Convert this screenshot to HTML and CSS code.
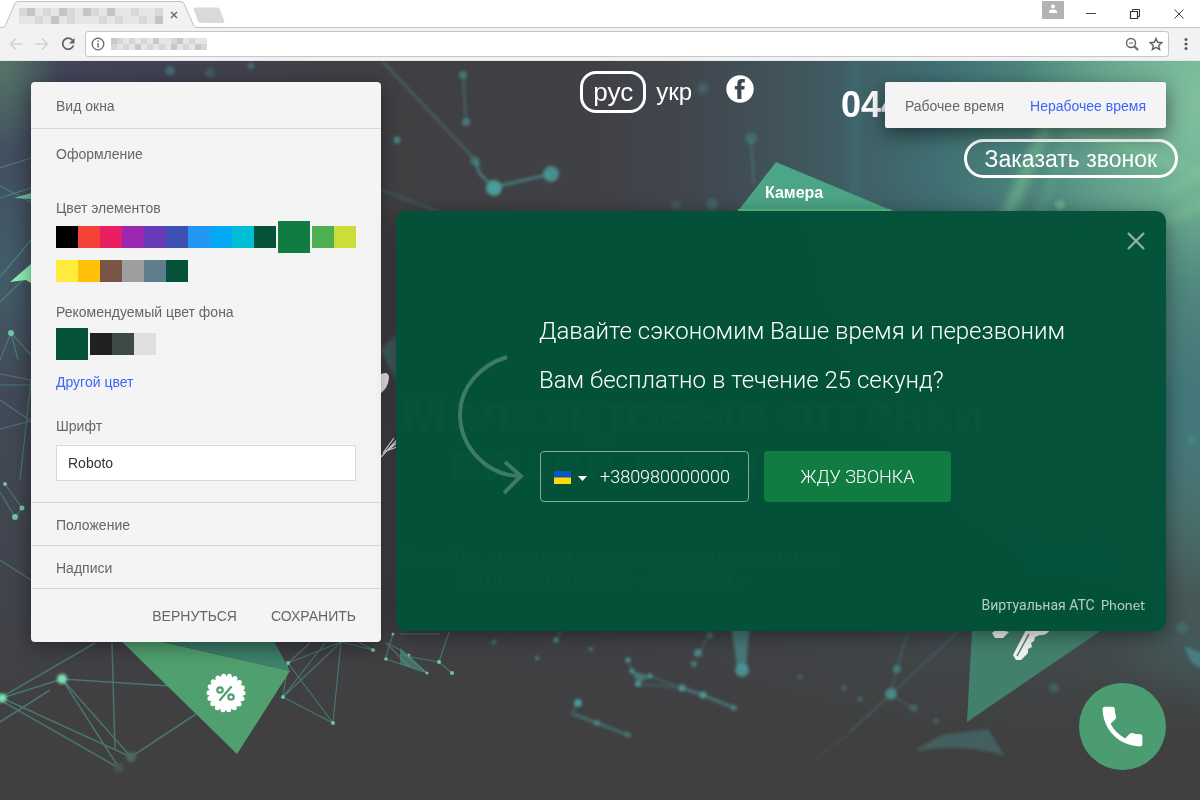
FILE: index.html
```html
<!DOCTYPE html>
<html lang="ru">
<head>
<meta charset="utf-8">
<title>Настройка виджета</title>
<link rel="stylesheet" href="styles.css">
</head>
<body>
<header class="browser">
  <div class="tab-strip">
    <div class="tab">
      <svg class="tab-shape" width="225" height="28" viewBox="0 0 225 28" aria-hidden="true">
        <path d="M0 27H3Q5 27 6 24L15 5.500Q16 3.500 18 3.500H181Q183 3.500 184 5.500L193 24Q194 27 197 27V28H0Z" fill="#f2f2f2"/>
        <path d="M0 27.500H3Q5 27.500 6 24L15 3.500Q16 1.500 18 1.500H181Q183 1.500 184 3.500L193 24Q194 27.500 197 27.500H225" fill="#f2f2f2" stroke="#c0c0c0"/>
        <path d="M195 7.500H217Q219 7.500 220 9.500L224 20Q225 23 222 23H202Q199 23 198 21L194 10Q193 7.500 195 7.500Z" fill="#d9d9d9"/>
        <path d="M19 8h144v16H19z" fill="#e5e5e5"/>
        <path d="M35 16h8v8h-8zM43 8h8v8h-8zM67 8h8v8h-8zM67 16h8v8h-8zM91 8h8v8h-8zM99 16h8v8h-8zM115 16h8v8h-8zM131 8h8v8h-8zM139 16h8v8h-8zM155 8h8v8h-8zM19 8h8v8h-8z" fill="#d9d9d9"/>
        <path d="M27 8h8v8h-8zM51 16h8v8h-8zM59 8h8v8h-8zM83 8h8v8h-8zM107 8h8v8h-8zM155 16h8v8h-8z" fill="#c4c4c4"/>
      </svg>
      <button class="tab-close" type="button" aria-label="Закрыть вкладку">
        <svg width="8" height="8" viewBox="0 0 8 8"><path d="M1 1l6 6M7 1l-6 6" stroke="#666" stroke-width="1.400"/></svg>
      </button>
    </div>
    <div class="window-controls">
      <span class="profile"><svg width="22" height="18" viewBox="0 0 22 18"><path d="M0 0h22v18H0z" fill="#b3b3b3"/><circle cx="11" cy="5.500" r="2" fill="#fff"/><path d="M7 12V10.500Q7 8.500 11 8.500T15 10.500V12Z" fill="#fff"/></svg></span>
      <button type="button" aria-label="Свернуть"><svg width="12" height="12" viewBox="0 0 12 12"><path d="M1 5.500h10" stroke="#444"/></svg></button>
      <button type="button" aria-label="Развернуть"><svg width="12" height="12" viewBox="0 0 12 12" fill="none" stroke="#333"><path d="M1.500 3.500h7v7h-7z" stroke-width="1.200"/><path d="M3.500 3.500v-2h7v7h-2"/></svg></button>
      <button type="button" aria-label="Закрыть"><svg width="12" height="12" viewBox="0 0 12 12"><path d="M1.500 1.500l9 9M10.500 1.500l-9 9" stroke="#444"/></svg></button>
    </div>
  </div>
  <div class="toolbar">
    <button type="button" aria-label="Назад"><svg width="14" height="14" viewBox="0 0 14 14" fill="none" stroke="#d2d2d2" stroke-width="1.500"><path d="M13.500 7H2M7 1.500L1.500 7 7 12.500"/></svg></button>
    <button type="button" aria-label="Вперёд"><svg width="14" height="14" viewBox="0 0 14 14" fill="none" stroke="#d2d2d2" stroke-width="1.500"><path d="M.5 7H12M7 1.500L12.500 7 7 12.500"/></svg></button>
    <button type="button" aria-label="Обновить"><svg width="14" height="14" viewBox="0 0 14 14"><path d="M11.500 3.300A5.500 5.500 0 1 0 12.400 8.500" fill="none" stroke="#606060" stroke-width="1.700"/><path d="M13.500 1v5.500H8z" fill="#606060"/></svg></button>
    <div class="address">
      <svg width="14" height="14" viewBox="0 0 14 14"><circle cx="7" cy="7" r="5.800" fill="none" stroke="#666" stroke-width="1.300"/><path d="M7 6v4.500M7 3.500V5" stroke="#666" stroke-width="1.400"/></svg>
      <svg class="address-mask" width="96" height="12" viewBox="0 0 96 12" aria-hidden="true">
        <path d="M0 0h96v12H0z" fill="#e5e5e5"/>
        <path d="M6 0h6v6H6zM0 6h6v6H0zM18 0h6v6h-6zM12 6h6v6h-6zM30 0h6v6h-6zM36 6h6v6h-6zM48 6h6v6h-6zM60 0h6v6h-6zM72 6h6v6h-6zM78 0h6v6h-6zM90 6h6v6h-6z" fill="#d6d6d6"/>
        <path d="M0 0h6v6H0zM24 6h6v6h-6zM42 0h6v6h-6zM60 6h6v6h-6zM66 0h6v6h-6zM84 6h6v6h-6z" fill="#c8c8c8"/>
      </svg>
      <span class="address-tools">
        <svg width="14" height="14" viewBox="0 0 14 14" fill="none" stroke="#666"><circle cx="6" cy="6" r="4.500" stroke-width="1.400"/><path d="M9.200 9.200L13 13" stroke-width="2"/><path d="M4 6h4"/></svg>
        <svg width="14" height="14" viewBox="0 0 14 14"><path d="M7 1.500l1.600 3.800 4.200.4-3.200 2.700 1 4.100L7 10.300l-3.600 2.200 1-4.100L1.200 5.700l4.200-.4z" fill="none" stroke="#606060" stroke-width="1.400"/></svg>
      </span>
    </div>
    <button class="menu" type="button" aria-label="Меню"><svg width="4" height="12" viewBox="0 0 4 12" fill="#555"><circle cx="2" cy="1.500" r="1.500"/><circle cx="2" cy="6" r="1.500"/><circle cx="2" cy="10.500" r="1.500"/></svg></button>
  </div>
</header>

<main class="stage">
  <svg class="scene" viewBox="0 61 1200 739" preserveAspectRatio="xMidYMin slice" aria-hidden="true">
    <defs>
      <linearGradient id="base" x1="0" x2="1" y1="0" y2="0">
        <stop offset="0" stop-color="#425060"/><stop offset=".05" stop-color="#414558"/><stop offset=".15" stop-color="#404150"/><stop offset=".33" stop-color="#404043"/>
        <stop offset=".5" stop-color="#404146"/><stop offset=".58" stop-color="#41474f"/><stop offset=".68" stop-color="#41585f"/><stop offset=".78" stop-color="#3f6f73"/><stop offset=".9" stop-color="#549184"/><stop offset="1" stop-color="#62a88e"/>
      </linearGradient>
      <linearGradient id="fade" x1="0" x2="0" y1="0" y2="1">
        <stop offset=".15" stop-color="#404048" stop-opacity="0"/><stop offset=".45" stop-color="#404048" stop-opacity=".35"/><stop offset=".7" stop-color="#404046" stop-opacity=".75"/><stop offset=".85" stop-color="#404042" stop-opacity=".95"/><stop offset=".92" stop-color="#404040"/>
      </linearGradient>
      <radialGradient id="mint"><stop offset="0" stop-color="#8ac6a2"/><stop offset="1" stop-color="#8ac6a2" stop-opacity="0"/></radialGradient>
      <radialGradient id="moss"><stop offset="0" stop-color="#5a806a"/><stop offset="1" stop-color="#5a806a" stop-opacity="0"/></radialGradient>
      <radialGradient id="teal"><stop offset="0" stop-color="#42777b"/><stop offset="1" stop-color="#42777b" stop-opacity="0"/></radialGradient>
      <linearGradient id="shade" x1="0" x2="0" y1="0" y2="1"><stop offset="0" stop-color="#357260"/><stop offset="1" stop-color="#418670"/></linearGradient>
      <filter id="soft" x="-20%" y="-20%" width="140%" height="140%"><feGaussianBlur stdDeviation="1.800"/></filter>
      <filter id="haze" x="-40%" y="-40%" width="180%" height="180%"><feGaussianBlur stdDeviation="5"/></filter>
    </defs>
    <rect y="61" width="1200" height="739" fill="url(#base)"/>
    <rect y="61" width="1200" height="739" fill="url(#fade)"/>
    <ellipse cx="1210" cy="100" rx="190" ry="190" fill="url(#mint)" opacity=".8"/>
    <ellipse cx="0" cy="61" rx="60" ry="90" fill="url(#moss)" opacity=".8"/>
    <ellipse cx="0" cy="270" rx="60" ry="110" fill="url(#teal)" opacity=".4"/>
    <ellipse cx="1190" cy="400" rx="90" ry="200" fill="url(#teal)"/>
    <ellipse cx="1200" cy="650" rx="90" ry="60" fill="url(#teal)" opacity=".3"/>
    <g filter="url(#haze)" stroke="#84cc98" fill="none">
      <path d="M1052 115L1005 220" stroke-width="12" opacity=".5"/>
      <path d="M1072 125L1038 220" stroke-width="5" opacity=".3"/>
      <path d="M1060 125L1210 175" stroke-width="10" opacity=".35"/>
      <path d="M1166 222L1210 200M1166 192L1210 170" stroke-width="8" opacity=".4"/>
      <path d="M1166 490V380" stroke="#3a7078" stroke-width="14" opacity=".5"/>
      <path d="M855 61V210" stroke="#3f8082" stroke-width="8" opacity=".35"/>
    </g>
    <g filter="url(#soft)" stroke="#4b9595" fill="#4b9c9a" stroke-width="2">
      <path d="M383 62L480 165" fill="none" opacity=".45"/>
      <path d="M475 161L480 174L494 187L551 174" fill="none" opacity=".65" stroke-width="3"/>
      <path d="M463 75L466 122M751 138L754 185" fill="none" opacity=".45"/>
      <path d="M381 190L440 212" fill="none" opacity=".3"/>
      <circle cx="494" cy="188" r="7"/><circle cx="551" cy="174" r="7" opacity=".85"/><circle cx="475" cy="161" r="4" opacity=".4"/>
      <circle cx="463" cy="75" r="3" opacity=".6"/><circle cx="466" cy="122" r="3" opacity=".6"/><circle cx="397" cy="140" r="2.500" opacity=".8"/>
      <circle cx="170" cy="71" r="4" opacity=".45"/><circle cx="210" cy="73" r="4" opacity=".3"/><circle cx="251" cy="66" r="2" opacity=".6"/>
      <circle cx="703" cy="88" r="5" opacity=".3"/><circle cx="751" cy="138" r="5" opacity=".35"/><circle cx="712" cy="204" r="5" opacity=".3"/><circle cx="676" cy="205" r="4" opacity=".2"/>
      <circle cx="1060" cy="205" r="5" stroke="none" fill="#80c99a" opacity=".5"/>
      <path d="M732 625L738 668H745L749 625Z" opacity=".6"/><circle cx="742" cy="670" r="6" opacity=".85"/>
      <path d="M632 671L650 676L638 684Z" stroke="none" opacity=".6"/>
      <path d="M638 684L682 688M650 676L682 688" fill="none" opacity=".35"/>
      <path d="M682 688L703 695L734 708" fill="none" stroke-width="3" opacity=".6"/>
      <circle cx="632" cy="671" r="1.500"/><circle cx="650" cy="676" r="1.500"/><circle cx="638" cy="684" r="2"/><circle cx="682" cy="688" r="2.500"/><circle cx="703" cy="695" r="2.500"/><circle cx="734" cy="708" r="2" opacity=".7"/>
      <path d="M578 703L571 714" fill="none" opacity=".4"/><path d="M573 714L597 723L628 735" fill="none" stroke-width="3" opacity=".5"/><circle cx="578" cy="703" r="3"/><circle cx="597" cy="723" r="2" opacity=".7"/><circle cx="628" cy="735" r="2" opacity=".5"/>
      <circle cx="698" cy="653" r="3" opacity=".8"/><circle cx="694" cy="664" r="2" opacity=".7"/><circle cx="710" cy="635" r="2" opacity=".5"/><circle cx="628" cy="660" r="1.500"/><circle cx="591" cy="649" r="1" opacity=".8"/><circle cx="556" cy="640" r="1.500"/><circle cx="537" cy="658" r="1" opacity=".8"/><circle cx="494" cy="642" r="1" opacity=".8"/>
      <path d="M628 660L632 671M556 640L562 630M698 653L710 635" opacity=".35"/>
      <path d="M908 632L896 670L891 694L850 732M891 694L958 632M891 694L915 710" fill="none" opacity=".3"/>
      <circle cx="891" cy="694" r="5" opacity=".75"/><circle cx="897" cy="669" r="3" opacity=".6"/><circle cx="914" cy="708" r="3" opacity=".35"/><circle cx="860" cy="699" r="2" opacity=".4"/><circle cx="800" cy="677" r="2" opacity=".3"/><circle cx="844" cy="688" r="2" opacity=".4"/>
      <path d="M917 750L942 736L988 730L1002 754Q960 742 917 750Z" opacity=".35"/>
      <path d="M848 734L812 762" opacity=".15"/><circle cx="936" cy="721" r="2" opacity=".35"/><circle cx="1054" cy="688" r="4" opacity=".3"/><path d="M1186 648L1202 654V668L1192 662Z" opacity=".6"/><circle cx="1182" cy="628" r="5" opacity=".3"/><circle cx="1192" cy="440" r="3" opacity=".5"/>
      <path d="M381 350L397 336V380Z" opacity=".35"/>
    </g>
    <g stroke="#4fa18c" fill="none" stroke-width="1.200" opacity=".55">
      <path d="M0 186L31 202M0 168L31 158M0 198L31 188M0 277L31 240M0 302L31 272M11 333L0 360M11 333L31 355M11 333L18 360M0 385H31M0 374L31 380M0 429L31 421M0 400L31 421M5 484L22 508L15 517L0 492M31 380L20 480M0 560L31 580"/>
      <path d="M0 698L95 643M2 698L62 679L170 686M2 698L131 757M0 700L119 768M62 679L131 757M62 679L119 768M131 757L196 714M112 643L115 750M0 722L50 690" stroke-width="1.500"/>
      <path d="M288 663L341 642L283 697M288 663L310 643M325 643L283 697L333 723L341 642M288 663L333 723M288 663L283 697M341 642L373 650M359 642L373 650M393 634L385 660M387 643L400 650L427 673L386 659M400 634H440M400 655L439 662L452 673M439 662L449 632M386 643L410 667"/>
    </g>
    <path d="M10 282L31 264V283L26 280Z" fill="#8ef0b4"/>
    <path d="M14 198L31 193V199Z" fill="#78d9b0" opacity=".8"/>
    <g fill="#7de0b4">
      <circle cx="62" cy="679" r="5" filter="url(#soft)"/><circle cx="2" cy="698" r="4.500" filter="url(#soft)"/><circle cx="131" cy="757" r="5" fill="#4d6b60" filter="url(#soft)"/><circle cx="119" cy="768" r="5" fill="#46544f" filter="url(#soft)"/>
      <g opacity=".8"><circle cx="11" cy="333" r="3"/><circle cx="5" cy="484" r="2"/><circle cx="22" cy="508" r="2.500"/><circle cx="15" cy="517" r="3"/>
      <circle cx="288" cy="663" r="2"/><circle cx="283" cy="697" r="2"/><circle cx="333" cy="723" r="2"/><circle cx="373" cy="650" r="2"/><circle cx="386" cy="659" r="1.800"/><circle cx="393" cy="634" r="1.500"/><circle cx="409" cy="655" r="1.500"/><circle cx="427" cy="673" r="1.500"/><circle cx="439" cy="662" r="2"/><circle cx="452" cy="673" r="2"/></g>
    </g>
    <path d="M400 648L409 655L427 673L400 664Z" fill="#4c9e8b" opacity=".5"/>
    <path d="M776 162L893 211H738Z" fill="#4ca585"/>
    <path d="M738 209H890L893 211H738Z" fill="#58c487"/>
    <path d="M110 630L290 671L237 754Z" fill="#4fa06e"/>
    <path d="M110 630H268L290 671Z" fill="url(#shade)"/>
    <path d="M972 630H1102L967 722Z" fill="#42806b"/>
    <circle cx="226" cy="693" r="17" fill="#fff"/>
    <circle cx="226" cy="693" r="17" fill="none" stroke="#fff" stroke-width="5" stroke-linecap="round" stroke-dasharray="0 5.934"/>
    <g fill="none" stroke="#4fa06e" stroke-width="2.200"><circle cx="220" cy="690" r="2.700"/><circle cx="231" cy="697" r="2.700"/><path d="M231 687L220 700" stroke-linecap="round"/></g>
    <g fill="#f2f2f2">
      <path d="M381 374Q389 371 389 378Q388 388 381 393Z"/>
      <path d="M992 633L997 629L1009 632L1003 638L995 638Z"/>
      <path d="M1026 630H1050Q1046 636 1040 635L1035 637L1034 641L1031 643L1032 647L1028 649L1028 653L1021 660L1016 660L1013 655Z"/>
    </g>
    <path d="M1029 634L1017 656" stroke="#42806b" stroke-width="1.500"/>
    <path d="M381 457L397 440M383 453L394 438M386 451L397 447M385 452L397 443" stroke="#eee" fill="none" stroke-width="1.200"/>
    <text class="scene-label" x="765" y="198">Камера</text>
    <text class="scene-label scene-label-dim" x="1015" y="553">Выберите</text>
    <text class="scene-label scene-label-dim" x="1026" y="570">квартиру</text>
  </svg>

  <div class="site">
    <div class="site-header">
      <nav class="languages">
        <a class="language language-active" href="#">рус</a>
        <a class="language" href="#">укр</a>
      </nav>
      <a class="facebook" href="#" aria-label="Facebook">
        <svg width="28" height="28" viewBox="0 0 28 28"><circle cx="14" cy="14" r="13.700" fill="#fff"/><path d="M11.300 24V14.500H8.800V10.900H11.300V8.500C11.300 5.300 13 4 15.800 4H18.800V7.500H16.800C15.700 7.500 15.400 8 15.400 9V10.900H18.700L18.300 14.500H15.400V24Z" fill="#40464e"/></svg>
      </a>
      <div class="contacts">
        <span class="site-phone">044</span>
        <button class="order-call" type="button">Заказать звонок</button>
      </div>
    </div>
    <div class="hero">
      <h1>Малахитовые оттенки<br><span>вашей жизни</span></h1>
      <p>Узнайте, из каких оттенков состоит жизнь в<br>жилом комплексе «Малахит»</p>
    </div>
  </div>

  <div class="widget">
    <form class="panel">
      <button class="section-title" type="button">Вид окна</button>
      <section class="appearance">
        <button class="section-title section-open" type="button">Оформление</button>
        <fieldset class="palette">
          <legend>Цвет элементов</legend>
          <div class="swatches">
            <input class="c-black" type="radio" name="accent" aria-label="Чёрный">
            <input class="c-red" type="radio" name="accent" aria-label="Красный">
            <input class="c-pink" type="radio" name="accent" aria-label="Розовый">
            <input class="c-purple" type="radio" name="accent" aria-label="Пурпурный">
            <input class="c-violet" type="radio" name="accent" aria-label="Фиолетовый">
            <input class="c-indigo" type="radio" name="accent" aria-label="Индиго">
            <input class="c-blue" type="radio" name="accent" aria-label="Синий">
            <input class="c-sky" type="radio" name="accent" aria-label="Голубой">
            <input class="c-cyan" type="radio" name="accent" aria-label="Бирюзовый">
            <input class="c-malachite" type="radio" name="accent" aria-label="Малахитовый">
            <input class="c-emerald" type="radio" name="accent" aria-label="Изумрудный" checked>
            <input class="c-green" type="radio" name="accent" aria-label="Зелёный">
            <input class="c-lime" type="radio" name="accent" aria-label="Лаймовый">
            <input class="c-yellow" type="radio" name="accent" aria-label="Жёлтый">
            <input class="c-amber" type="radio" name="accent" aria-label="Янтарный">
            <input class="c-brown" type="radio" name="accent" aria-label="Коричневый">
            <input class="c-grey" type="radio" name="accent" aria-label="Серый">
            <input class="c-slate" type="radio" name="accent" aria-label="Серо-синий">
            <input class="c-malachite" type="radio" name="accent" aria-label="Тёмно-зелёный">
          </div>
        </fieldset>
        <fieldset class="palette">
          <legend>Рекомендуемый цвет фона</legend>
          <div class="swatches">
            <input class="c-malachite" type="radio" name="background" aria-label="Малахитовый" checked>
            <input class="c-coal" type="radio" name="background" aria-label="Угольный">
            <input class="c-graphite" type="radio" name="background" aria-label="Графитовый">
            <input class="c-light" type="radio" name="background" aria-label="Светло-серый">
          </div>
        </fieldset>
        <a class="other-color" href="#">Другой цвет</a>
        <label class="font-label" for="font">Шрифт</label>
        <select class="font-select" id="font"><option>Roboto</option></select>
      </section>
      <button class="section-title section-low" type="button">Положение</button>
      <button class="section-title section-low" type="button">Надписи</button>
      <div class="panel-actions">
        <button type="button">ВЕРНУТЬСЯ</button>
        <button type="submit">СОХРАНИТЬ</button>
      </div>
    </form>

    <div class="preview">
      <div class="mode-switch">
        <button type="button">Рабочее время</button>
        <button class="mode-active" type="button">Нерабочее время</button>
      </div>
      <section class="popup">
        <button class="popup-close" type="button" aria-label="Закрыть окно">
          <svg width="18" height="18" viewBox="0 0 18 18"><path d="M1 1l16 16M17 1L1 17" stroke="#8db5a6" stroke-width="2.400"/></svg>
        </button>
        <div class="popup-body">
          <svg class="popup-arrow" width="68" height="142" viewBox="0 0 68 142" fill="none" stroke="#3e7a66" stroke-width="4" aria-hidden="true"><path d="M51 3C24 11 4 34 4 60C4 94 32 122 64 122"/><path d="M49 108L65 122L48 139"/></svg>
          <form class="callback">
            <p>Давайте сэкономим Ваше время и перезвоним<br>Вам бесплатно в течение 25 секунд?</p>
            <div class="callback-row">
              <div class="phone-field">
                <button class="country" type="button" aria-label="Украина">
                  <svg width="17" height="13" viewBox="0 0 17 13"><path d="M0 0h17v7H0z" fill="#0a57c2"/><path d="M0 6.500h17V13H0z" fill="#ffd90a"/></svg>
                  <svg class="caret" width="9" height="5" viewBox="0 0 9 5"><path d="M0 0h9L4.500 5z" fill="#fff"/></svg>
                </button>
                <input type="tel" value="+380980000000" aria-label="Номер телефона">
              </div>
              <button class="call-me" type="submit">ЖДУ ЗВОНКА</button>
            </div>
          </form>
        </div>
        <footer class="popup-footer"><span>Виртуальная АТС</span> <a href="#">Phonet</a></footer>
      </section>
      <button class="call-button" type="button" aria-label="Позвонить">
        <svg width="53" height="53" viewBox="0 0 24 24"><path fill="#fff" d="M6.620 10.790c1.440 2.830 3.760 5.140 6.590 6.590l2.200-2.200c.27-.27.67-.36 1.020-.24 1.120.37 2.330.57 3.570.57.55 0 1 .45 1 1V20c0 .55-.45 1-1 1-9.390 0-17-7.610-17-17 0-.55.45-1 1-1h3.500c.55 0 1 .45 1 1 0 1.250.2 2.450.57 3.570.11.35.03.74-.25 1.020l-2.200 2.200z"/></svg>
      </button>
    </div>
  </div>
</main>
</body>
</html>
```
FILE: styles.css
```css
* { box-sizing: border-box; }

body {
  margin: 0;
  min-height: 100vh;
  display: flex;
  flex-direction: column;
  font: 14px/20px "Liberation Sans", Arial, sans-serif;
  color: #666;
}

button, input, select {
  margin: 0;
  padding: 0;
  border: 0;
  background: none;
  font: inherit;
  color: inherit;
}

a { text-decoration: none; color: inherit; }
svg { display: block; flex: none; }

/* Browser window */
.browser { background: #f2f2f2; border-bottom: 1px solid #e4e8e4; }
.tab-strip {
  height: 28px;
  display: flex;
  justify-content: space-between;
  background: linear-gradient(#fff 27px, #c4c4c4 27px);
}
.tab { display: grid; }
.tab-shape, .tab-close { grid-area: 1 / 1; }
.tab-close { align-self: center; justify-self: start; margin-left: 170px; padding-top: 2px; }
.window-controls { display: flex; align-items: center; gap: 32px; padding-right: 15px; }
.profile { align-self: flex-start; padding-top: 1px; margin-right: -11px; }
.toolbar { display: flex; align-items: center; gap: 12px; height: 32px; padding: 0 12px 0 9px; }
.address {
  flex: 1;
  height: 26px;
  display: flex;
  align-items: center;
  gap: 6px;
  margin-left: -2px;
  padding: 0 5px;
  border: 1px solid #c6c6c6;
  border-radius: 3px;
  background: #fff;
}
.address-tools { display: flex; gap: 10px; margin-left: auto; }
.menu { margin-left: 3px; }

/* Stage */
.stage { position: relative; flex: 1; overflow: hidden; background: #404040; }
.scene { position: absolute; inset: 0; width: 100%; height: 100%; }
.scene-label { font: bold 16px "Liberation Sans", Arial, sans-serif; fill: #fff; }
.scene-label-dim { font-size: 20px; fill: #006080; }

/* Client site under the widget */
.site { position: absolute; inset: 0; color: #fff; }
.site-header { display: flex; justify-content: flex-end; align-items: flex-start; padding: 10px 22px 0; }
.languages { display: flex; align-items: center; gap: 10px; font-size: 24px; }
.language { line-height: 36px; }
.language-active { padding: 0 10px; border: 3px solid #fff; border-radius: 16px; font-size: 26px; }
.facebook { margin: 4px 87px 0 34px; }
.contacts { display: flex; flex-direction: column; width: 337px; }
.site-phone { font: bold 36px/68px "Liberation Sans", Arial, sans-serif; }
.order-call {
  align-self: flex-end;
  height: 39px;
  padding: 0 18px;
  border: 3px solid #fff;
  border-radius: 20px;
  font-size: 23px;
}
.hero { padding: 211px 0 0 402px; color: rgba(255, 255, 255, 0.6); }
.hero h1 { margin: 0; font: bold 53px/48px "Liberation Sans", Arial, sans-serif; }
.hero h1 span { padding-left: 46px; }
.hero p { width: 400px; margin: 60px 0 0; font: bold 20px/23px "Liberation Sans", Arial, sans-serif; text-align: center; white-space: nowrap; }

/* Widget settings */
.widget { position: relative; display: flex; align-items: flex-start; gap: 15px; padding: 21px 34px 30px 31px; }
.panel {
  flex: none;
  width: 350px;
  display: flex;
  flex-direction: column;
  border-radius: 4px;
  background: #f4f4f4;
  box-shadow: 0 4px 20px rgba(0, 0, 0, 0.4);
}
.section-title { height: 47px; padding: 2px 25px 0; border-bottom: 1px solid #d9d9d9; text-align: left; font-size: 14px; }
.section-open { height: 50px; padding: 0; border: 0; }
.section-low { height: 43px; }
.appearance { display: flex; flex-direction: column; padding: 0 25px 21px; border-bottom: 1px solid #d9d9d9; }
.palette { margin: 0; padding: 0; border: 0; min-width: 0; }
.palette legend { padding: 19px 0 3px; }
.palette + .palette legend { padding: 20px 0 6px; }
.swatches { display: flex; flex-wrap: wrap; align-items: center; row-gap: 7px; }
.swatches input { appearance: none; width: 22px; height: 22px; }
.swatches input:checked { width: 32px; height: 32px; margin: 0 2px; }
.swatches input:checked:first-child { margin-left: 0; }
.other-color { align-self: flex-start; margin-top: 12px; color: #3d64ff; }
.font-label { margin-top: 24px; }
.font-select {
  appearance: none;
  height: 36px;
  margin-top: 9px;
  padding: 0 11px;
  border: 1px solid #d9d9d9;
  border-radius: 0;
  background: #fff;
  color: #333;
}
.panel-actions { display: flex; justify-content: flex-end; gap: 34px; height: 53px; padding: 0 25px; }

.c-black { background: #000; }
.c-red { background: #f44336; }
.c-pink { background: #e91e63; }
.c-purple { background: #9c27b0; }
.c-violet { background: #673ab7; }
.c-indigo { background: #3f51b5; }
.c-blue { background: #2196f3; }
.c-sky { background: #03a9f4; }
.c-cyan { background: #00bcd4; }
.c-malachite { background: #045239; }
.c-emerald { background: #107c41; }
.c-green { background: #4caf50; }
.c-lime { background: #cddc39; }
.c-yellow { background: #ffeb3b; }
.c-amber { background: #ffc107; }
.c-brown { background: #795548; }
.c-grey { background: #9e9e9e; }
.c-slate { background: #607d8b; }
.c-coal { background: #212121; }
.c-graphite { background: #3e4a45; }
.c-light { background: #e0e0e0; }

/* Widget preview */
.preview { flex: 1; display: flex; flex-direction: column; }
.mode-switch {
  align-self: flex-end;
  display: flex;
  gap: 26px;
  height: 46px;
  padding: 1px 20px 0;
  border-radius: 2px;
  background: #f4f4f4;
  box-shadow: 0 6px 20px rgba(0, 0, 0, 0.5);
}
.mode-active { color: #3d64ff; }

.popup {
  display: flex;
  flex-direction: column;
  min-height: 420px;
  margin-top: 83px;
  padding: 21px;
  border-radius: 10px;
  background: rgba(3, 82, 57, 0.98);
  box-shadow: 0 4px 20px rgba(0, 0, 0, 0.4);
  color: #fff;
  font-family: Roboto, sans-serif;
}
.popup-close { align-self: flex-end; }
.popup-body { display: flex; align-items: flex-end; gap: 15px; padding: 57px 0 0 39px; }
.popup-arrow { margin-bottom: 6px; }
.callback p { margin: 0; font-size: 24px; font-weight: 300; line-height: 49px; }
.callback-row { display: flex; gap: 15px; margin: 46px 0 0 1px; font-size: 18px; font-weight: 300; }
.phone-field { display: flex; width: 209px; height: 51px; border: 1px solid #84ac9d; border-radius: 4px; }
.country { display: flex; align-items: center; gap: 7px; padding: 2px 13px 0 13px; }
.caret { margin-top: 2px; }
.phone-field input { flex: 1; min-width: 0; outline: 0; }
.call-me { width: 187px; height: 51px; border-radius: 4px; background: #107c41; }
.popup-footer { display: flex; justify-content: flex-end; gap: 6px; height: 10px; margin-top: auto; line-height: 10px; color: #b4cec4; }
.popup-footer a { font-family: Lato, sans-serif; }

.call-button {
  align-self: flex-end;
  display: grid;
  place-items: center;
  width: 87px;
  height: 87px;
  margin-top: 52px;
  border-radius: 50%;
  background: #4b9c70;
}
```
